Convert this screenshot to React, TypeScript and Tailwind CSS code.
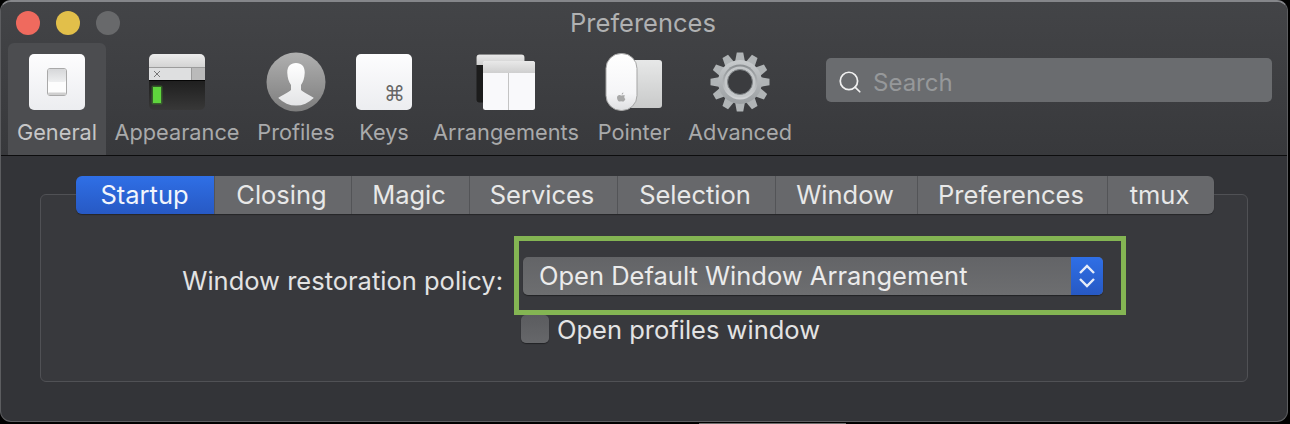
import { Search } from "lucide-react";

const font = "font-['Inter','Liberation_Sans',sans-serif]";

const tabs = [
  { name: "Startup", width: "w-[138px]" },
  { name: "Closing", width: "w-[137px]" },
  { name: "Magic", width: "w-[118px]" },
  { name: "Services", width: "w-[148px]" },
  { name: "Selection", width: "w-[158px]" },
  { name: "Window", width: "w-[142px]" },
  { name: "Preferences", width: "w-[190px]" },
  { name: "tmux", width: "w-[107px]" },
];

function GeneralIcon() {
  return (
    <svg width="56" height="56" viewBox="0 0 56 56">
      <defs>
        <linearGradient id="gen" x1="0" y1="0" x2="0" y2="1">
          <stop offset="0" stopColor="#fdfdfe" />
          <stop offset="1" stopColor="#ecedf0" />
        </linearGradient>
        <linearGradient id="genTop" x1="0" y1="0" x2="0" y2="1">
          <stop offset="0" stopColor="#d6d7d9" />
          <stop offset="1" stopColor="#eeeff0" />
        </linearGradient>
      </defs>
      <rect x="0" y="0" width="56" height="56" rx="5" fill="url(#gen)" />
      <rect x="18.5" y="14.5" width="19" height="27" rx="2.5" fill="#fdfdfd" stroke="#a9a9a9" />
      <rect x="19" y="15" width="18" height="13" rx="2" fill="url(#genTop)" />
      <rect x="19" y="38.5" width="18" height="2.5" rx="1" fill="#cfcfcf" />
    </svg>
  );
}

function AppearanceIcon() {
  return (
    <svg width="56" height="56" viewBox="0 0 56 56">
      <defs>
        <linearGradient id="appTop" x1="0" y1="0" x2="0" y2="1">
          <stop offset="0" stopColor="#ececec" />
          <stop offset="1" stopColor="#d4d4d4" />
        </linearGradient>
        <linearGradient id="appBody" x1="0" y1="0" x2="0" y2="1">
          <stop offset="0" stopColor="#1e1e1e" />
          <stop offset="1" stopColor="#383838" />
        </linearGradient>
        <clipPath id="appClip">
          <rect width="56" height="56" rx="5" />
        </clipPath>
      </defs>
      <g clipPath="url(#appClip)">
        <rect width="56" height="13" fill="url(#appTop)" />
        <rect y="13" width="56" height="1" fill="#9c9c9c" />
        <rect y="14" width="42" height="12" fill="#dedfe0" />
        <rect x="42" y="14" width="14" height="12" fill="#bababa" />
        <rect x="42" y="14" width="1" height="12" fill="#9a9a9a" />
        <path d="M5 17 L11 23 M11 17 L5 23" stroke="#777" strokeWidth="1" />
        <rect y="26" width="56" height="30" fill="url(#appBody)" />
        <rect y="26" width="56" height="1" fill="#050505" />
        <rect x="2.5" y="31.5" width="11" height="19" rx="1.5" fill="#3f7f2c" opacity="0.6" />
        <rect x="4" y="33" width="8" height="16" fill="#5fd53d" />
      </g>
    </svg>
  );
}

function ProfileIcon() {
  return (
    <svg width="60" height="60" viewBox="0 0 60 60">
      <defs>
        <linearGradient id="prof" x1="0" y1="0" x2="0" y2="1">
          <stop offset="0" stopColor="#b0b0b0" />
          <stop offset="1" stopColor="#7d7d7d" />
        </linearGradient>
        <linearGradient id="bust" x1="0" y1="0" x2="0" y2="1">
          <stop offset="0" stopColor="#ffffff" />
          <stop offset="1" stopColor="#dfe0e2" />
        </linearGradient>
        <clipPath id="profClip">
          <circle cx="30" cy="29" r="24.5" />
        </clipPath>
      </defs>
      <circle cx="30" cy="30" r="29.5" fill="url(#prof)" />
      <g clipPath="url(#profClip)">
        <path
          d="M30 11 C24 11 21 15 21.3 21 C21.5 26 22.8 30 25 33 L25 38 C22 41 16 43 12 46 L12 60 L48 60 L48 46 C44 43 38 41 35 38 L35 33 C37.2 30 38.5 26 38.7 21 C39 15 36 11 30 11 Z"
          fill="url(#bust)"
        />
      </g>
    </svg>
  );
}

function KeysIcon() {
  return (
    <div className="relative w-[56px] h-[56px] rounded-[5px] bg-gradient-to-b from-[#fdfdfe] to-[#ecedf0]">
      <span className="absolute right-[7px] bottom-[3px] text-[21px] leading-[26px] text-[#666] font-['DejaVu_Sans',sans-serif]">⌘</span>
    </div>
  );
}

function ArrangementsIcon() {
  return (
    <svg width="60" height="56" viewBox="0 0 60 56">
      <defs>
        <linearGradient id="arrHead" x1="0" y1="0" x2="0" y2="1">
          <stop offset="0" stopColor="#e9e9e9" />
          <stop offset="1" stopColor="#cfcfcf" />
        </linearGradient>
      </defs>
      <rect x="0.5" y="0.5" width="48" height="48" rx="3" fill="#1c1c1c" />
      <path d="M0.5 11 V3.5 A3 3 0 0 1 3.5 0.5 H45.5 A3 3 0 0 1 48.5 3.5 V11 Z" fill="url(#arrHead)" />
      <rect x="7" y="7" width="52" height="49" rx="2.5" fill="#f9f9fb" />
      <path d="M7 19 V9.5 A2.5 2.5 0 0 1 9.5 7 H56.5 A2.5 2.5 0 0 1 59 9.5 V19 Z" fill="url(#arrHead)" />
      <rect x="32" y="19" width="1" height="37" fill="#c4c4c4" />
    </svg>
  );
}

function PointerIcon() {
  return (
    <svg width="58" height="58" viewBox="0 0 58 58">
      <defs>
        <linearGradient id="pad" x1="0" y1="0" x2="0" y2="1">
          <stop offset="0" stopColor="#e7e8e8" />
          <stop offset="1" stopColor="#c9caca" />
        </linearGradient>
        <linearGradient id="mouse" x1="0" y1="0" x2="0" y2="1">
          <stop offset="0" stopColor="#ffffff" />
          <stop offset="0.7" stopColor="#f5f5f7" />
          <stop offset="1" stopColor="#dedfe1" />
        </linearGradient>
      </defs>
      <rect x="24" y="7" width="33" height="48" rx="3" fill="url(#pad)" />
      <rect x="1" y="0.5" width="31" height="57" rx="15" fill="url(#mouse)" stroke="#a5a5a5" strokeWidth="1" />
      <path
        d="M17 42.5 C18 42 19 42 20 42.6 C19 43.3 19 45.3 20.4 46 C19.8 47.4 19 48.6 18 48.6 C17.2 48.6 16.9 48.2 16.2 48.2 C15.5 48.2 15.2 48.6 14.4 48.6 C13.2 48.6 12 46.4 12 44.6 C12 42.6 14 41.6 15.4 42.2 C16 42.5 16.5 42.7 17 42.5 Z M16.6 41.6 C16.6 40.4 17.4 39.6 18.4 39.4 C18.5 40.6 17.6 41.6 16.6 41.6 Z"
        fill="#a8a8a8"
      />
    </svg>
  );
}

function GearIcon() {
  const teeth = Array.from({ length: 12 }, (_, i) => i * 30);
  return (
    <svg width="60" height="60" viewBox="0 0 60 60">
      <defs>
        <linearGradient id="gear" x1="0" y1="0" x2="0" y2="1">
          <stop offset="0" stopColor="#c8cbcd" />
          <stop offset="1" stopColor="#9a9ea1" />
        </linearGradient>
        <linearGradient id="gearRing" x1="0" y1="0" x2="0" y2="1">
          <stop offset="0" stopColor="#8b8f92" />
          <stop offset="1" stopColor="#d4d6d8" />
        </linearGradient>
      </defs>
      {teeth.map((deg) => (
        <path key={deg} d="M26.8 0.5 L33.2 0.5 L35 10 L25 10 Z" fill="#b0b4b6" transform={`rotate(${deg} 30 30)`} />
      ))}
      <circle cx="30" cy="30" r="22" fill="url(#gear)" />
      <circle cx="30" cy="30" r="17.5" fill="url(#gearRing)" />
      <circle cx="30" cy="30" r="15.5" fill="#c4c7c9" />
      <circle cx="30" cy="30" r="12.5" fill="#3b3c3f" stroke="#83878a" strokeWidth="1" />
    </svg>
  );
}

const toolbarItems = [
  { name: "General", width: "w-[98px]", icon: <GeneralIcon /> },
  { name: "Appearance", width: "w-[142px]", icon: <AppearanceIcon /> },
  { name: "Profiles", width: "w-[96px]", icon: <ProfileIcon /> },
  { name: "Keys", width: "w-[80px]", icon: <KeysIcon /> },
  { name: "Arrangements", width: "w-[164px]", icon: <ArrangementsIcon /> },
  { name: "Pointer", width: "w-[92px]", icon: <PointerIcon /> },
  { name: "Advanced", width: "w-[120px]", icon: <GearIcon /> },
];

export default function App() {
  return (
    <div className={`h-[424px] w-[1290px] bg-black overflow-hidden ${font}`}>
      <div className="w-[1288px] h-[422px] rounded-[11px] border border-[#5c5d60] border-t-2 border-t-[#85868a] bg-[#333438] overflow-hidden flex flex-col">
        {/* Toolbar */}
        <div className="h-[154px] bg-gradient-to-b from-[#434447] to-[#38393c] border-b border-[#0d0d0e] shrink-0 flex flex-col">
          <div className="grid grid-cols-[1fr_auto_1fr] items-center h-[41px]">
            <div className="flex gap-[16px] pl-[15px]">
              <span className="w-[24px] h-[24px] rounded-full bg-[#ef6a5e]" />
              <span className="w-[24px] h-[24px] rounded-full bg-[#e2bf4a]" />
              <span className="w-[24px] h-[24px] rounded-full bg-[#68696b]" />
            </div>
            <div className="text-[25.5px] text-[#b0b1b2] leading-none pr-[2px]">Preferences</div>
            <div />
          </div>
          <div className="flex pl-[7px] flex-1">
            {toolbarItems.map((item, i) => (
              <div
                key={item.name}
                className={`${item.width} flex flex-col items-center rounded-t-[6px] ${i === 0 ? "bg-[#4c4d50]" : ""}`}
              >
                <div className="h-[60px] mt-[9px] flex items-center justify-center">{item.icon}</div>
                <div className={`mt-[6px] text-[21.75px] leading-[28px] whitespace-nowrap ${i === 0 ? "text-[#c6c6c7]" : "text-[#a9aaab]"}`}>
                  {item.name}
                </div>
              </div>
            ))}
            <div className="ml-[26px] mt-[15px] w-[446px] h-[44px] rounded-[5px] bg-[#6a6c6f] flex items-center pl-[11px] gap-[10px]">
              <Search size={26} strokeWidth={1.6} className="text-[#f0f0f0] mt-[3px]" />
              <span className="text-[24px] text-[#96989a] leading-none pt-[5px]">Search</span>
            </div>
          </div>
        </div>

        {/* Tabs and panel */}
        <div className="flex-1 pt-[20px] px-[39px]">
          <div className="relative z-10 flex w-fit ml-[36px] h-[38px] -mb-[20px] rounded-[6px] overflow-hidden shadow-[0_1px_1px_rgba(0,0,0,0.35)]">
            {tabs.map((tab, i) => (
              <div
                key={tab.name}
                className={`${tab.width} flex items-center justify-center text-[25.5px] leading-none ${
                  i === 0
                    ? "bg-gradient-to-b from-[#2f6fe6] to-[#2759c4] text-[#f2f5fc] pr-[1px]"
                    : "bg-[#67686b] border-l border-[#535457] text-[#e8e8e8] pr-[3px]"
                }`}
              >
                {tab.name}
              </div>
            ))}
          </div>
          <div className="h-[188px] rounded-[6px] border border-[#505155] bg-[#38393d] pt-[41px] pl-[141px]">
            <div className="flex items-start">
              <div className="w-[321px] pt-[29px] text-[25.5px] leading-[31px] text-[#e3e3e3] whitespace-nowrap text-right">
                Window restoration policy:
              </div>
              <div className="ml-[11px] w-[612px] h-[79px] border-[5px] border-[#84b553] flex items-center pl-[4px]">
                <div className="w-[580px] h-[38px] rounded-[5px] bg-gradient-to-b from-[#636467] to-[#6d6e70] flex items-center shadow-[0_1px_1px_rgba(0,0,0,0.4)] overflow-hidden">
                  <span className="flex-1 pl-[16px] pt-[1px] text-[25.5px] leading-none text-[#ebebeb] whitespace-nowrap">
                    Open Default Window Arrangement
                  </span>
                  <span className="w-[32px] h-full bg-gradient-to-b from-[#2f6fe6] to-[#2759c4] flex items-center justify-center">
                    <svg width="18" height="24" viewBox="0 0 18 24" fill="none" stroke="#e6ecf8" strokeWidth="2.4">
                      <path d="M2 9 L9 2 L16 9" />
                      <path d="M2 15 L9 22 L16 15" />
                    </svg>
                  </span>
                </div>
              </div>
            </div>
            <div className="flex items-center ml-[339px] h-[28px] gap-[8px]">
              <span className="w-[28px] h-[28px] rounded-[5px] bg-gradient-to-b from-[#5b5c5f] to-[#66676a] shadow-[0_1px_1px_rgba(0,0,0,0.4)]" />
              <span className="text-[25.5px] leading-none pt-[1px] text-[#e3e3e3] whitespace-nowrap">Open profiles window</span>
            </div>
          </div>
        </div>
      </div>
      <div className="ml-[699px] mt-[1px] w-[147px] h-[1px] bg-[#6b6b6b]" />
    </div>
  );
}
